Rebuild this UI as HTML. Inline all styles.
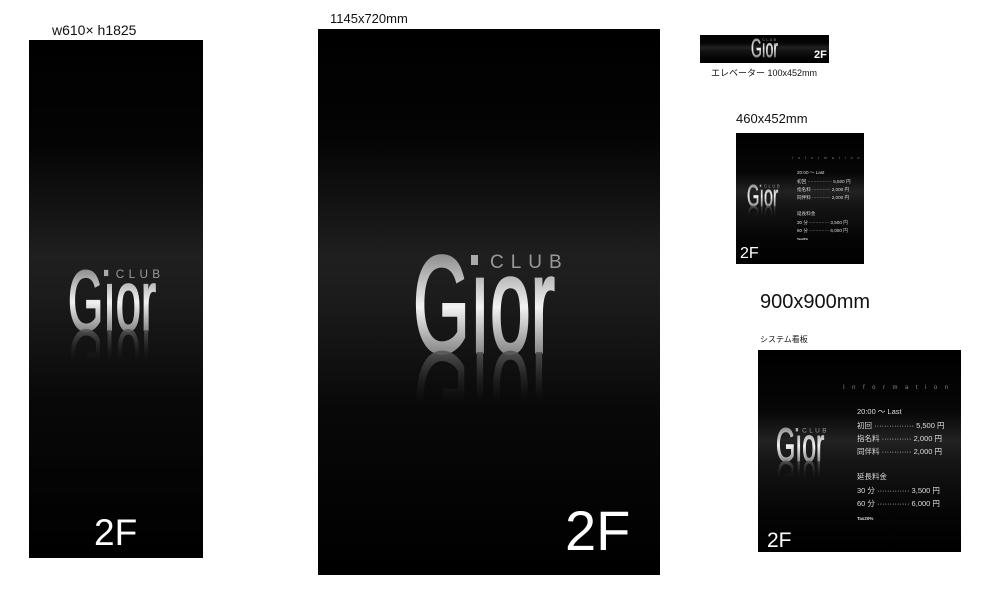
<!DOCTYPE html>
<html><head><meta charset="utf-8"><style>
html,body{margin:0;padding:0;background:#fff;width:981px;height:606px;overflow:hidden}
svg{display:block}
text{font-family:"Liberation Sans","Noto Sans CJK JP",sans-serif}
</style></head><body>
<svg width="981" height="606" viewBox="0 0 981 606" xmlns="http://www.w3.org/2000/svg">
<defs>
<linearGradient id="bg" x1="0" y1="0" x2="0" y2="1">
<stop offset="0" stop-color="#000"/><stop offset="0.2" stop-color="#040404"/>
<stop offset="0.42" stop-color="#1f1f1f"/><stop offset="0.5" stop-color="#1b1b1b"/>
<stop offset="0.7" stop-color="#080808"/><stop offset="1" stop-color="#000"/>
</linearGradient>
<linearGradient id="bgs" x1="0" y1="0" x2="0" y2="1">
<stop offset="0" stop-color="#000"/><stop offset="0.3" stop-color="#060606"/>
<stop offset="0.45" stop-color="#222"/><stop offset="0.55" stop-color="#151515"/>
<stop offset="0.8" stop-color="#050505"/><stop offset="1" stop-color="#000"/>
</linearGradient>
<linearGradient id="gt" gradientUnits="userSpaceOnUse" x1="0" y1="0" x2="0" y2="100">
<stop offset="0" stop-color="#8a8a8a"/><stop offset="0.55" stop-color="#f2f2f2"/><stop offset="1" stop-color="#8a8a8a"/>
</linearGradient>
<linearGradient id="rf" gradientUnits="userSpaceOnUse" x1="0" y1="100" x2="0" y2="50">
<stop offset="0" stop-color="#555" stop-opacity="0.9"/><stop offset="1" stop-color="#222" stop-opacity="0"/>
</linearGradient>
</defs>

<text x="52" y="35" font-size="14" fill="#111">w610× h1825</text>
<text x="330" y="23" font-size="13" fill="#111">1145x720mm</text>
<text x="711" y="76" font-size="9" fill="#111">エレベーター 100x452mm</text>
<text x="736" y="123" font-size="13" fill="#111">460x452mm</text>
<text x="760" y="308" font-size="20" fill="#111">900x900mm</text>
<text x="760" y="342" font-size="8" fill="#111">システム看板</text>

<rect x="29" y="40" width="174" height="518" fill="url(#bg)"/>
<rect x="318" y="29" width="342" height="546" fill="url(#bg)"/>
<rect x="700" y="35" width="129" height="28" fill="url(#bgs)"/>
<rect x="736" y="133" width="128" height="131" fill="url(#bgs)"/>
<rect x="758" y="350" width="203" height="202" fill="url(#bgs)"/>

<g transform="translate(68,268) scale(0.62)">
<text x="0" y="100" font-size="138" textLength="142" lengthAdjust="spacingAndGlyphs" fill="url(#gt)" stroke="url(#gt)" stroke-width="3">Gıor</text>
<rect x="58" y="3" width="7" height="10" fill="#aaa"/>
<text x="77" y="16" font-size="19" letter-spacing="7" fill="#999">CLUB</text>
<g transform="translate(0,200) scale(1,-1)"><text x="0" y="100" font-size="138" textLength="142" lengthAdjust="spacingAndGlyphs" fill="url(#rf)">Gıor</text></g>
</g>
<g transform="translate(413,252)">
<text x="0" y="100" font-size="138" textLength="142" lengthAdjust="spacingAndGlyphs" fill="url(#gt)" stroke="url(#gt)" stroke-width="3">Gıor</text>
<rect x="58" y="3" width="7" height="10" fill="#aaa"/>
<text x="77" y="16" font-size="19" letter-spacing="7" fill="#999">CLUB</text>
<g transform="translate(0,200) scale(1,-1)"><text x="0" y="100" font-size="138" textLength="142" lengthAdjust="spacingAndGlyphs" fill="url(#rf)">Gıor</text></g>
</g>
<g transform="translate(751,38) scale(0.19)">
<text x="0" y="100" font-size="138" textLength="142" lengthAdjust="spacingAndGlyphs" fill="url(#gt)" stroke="url(#gt)" stroke-width="3">Gıor</text>
<text x="60" y="16" font-size="19" letter-spacing="7" fill="#999">CLUB</text>
</g>
<g transform="translate(747,184) scale(0.22)">
<text x="0" y="100" font-size="138" textLength="142" lengthAdjust="spacingAndGlyphs" fill="url(#gt)" stroke="url(#gt)" stroke-width="3">Gıor</text>
<rect x="58" y="3" width="7" height="10" fill="#aaa"/>
<text x="77" y="16" font-size="19" letter-spacing="7" fill="#999">CLUB</text>
<g transform="translate(0,200) scale(1,-1)"><text x="0" y="100" font-size="138" textLength="142" lengthAdjust="spacingAndGlyphs" fill="url(#rf)">Gıor</text></g>
</g>
<g transform="translate(776,427) scale(0.34)">
<text x="0" y="100" font-size="138" textLength="142" lengthAdjust="spacingAndGlyphs" fill="url(#gt)" stroke="url(#gt)" stroke-width="3">Gıor</text>
<rect x="58" y="3" width="7" height="10" fill="#aaa"/>
<text x="77" y="16" font-size="19" letter-spacing="7" fill="#999">CLUB</text>
<g transform="translate(0,200) scale(1,-1)"><text x="0" y="100" font-size="138" textLength="142" lengthAdjust="spacingAndGlyphs" fill="url(#rf)">Gıor</text></g>
</g>

<text x="94" y="545" font-size="37" fill="#fff">2F</text>
<text x="565" y="550" font-size="56" fill="#fff">2F</text>
<text x="814" y="58" font-size="11" font-weight="bold" fill="#fff">2F</text>
<text x="740" y="258" font-size="16" fill="#fff">2F</text>
<text x="767" y="547" font-size="21" fill="#fff">2F</text>

<g font-size="7.5" fill="#ddd">
<text x="843" y="389" font-size="6" letter-spacing="7.5" fill="#888">Information</text>
<text x="857" y="414">20:00 ～ Last</text>
<text x="857" y="428">初回 ················ 5,500 円</text>
<text x="857" y="441">指名料 ············ 2,000 円</text>
<text x="857" y="454">同伴料 ············ 2,000 円</text>
<text x="857" y="479">延長料金</text>
<text x="857" y="493">30 分 ············· 3,500 円</text>
<text x="857" y="506">60 分 ············· 6,000 円</text>
<text x="857" y="520" font-size="4.5" font-weight="bold">Tax20%</text>
</g>
<g font-size="4.6" fill="#ddd">
<text x="792" y="159" font-size="3.5" letter-spacing="5" fill="#888">Information</text>
<text x="797" y="174">20:00 ～ Last</text>
<text x="797" y="183">初回 ················ 5,500 円</text>
<text x="797" y="191">指名料 ············ 2,000 円</text>
<text x="797" y="199">同伴料 ············ 2,000 円</text>
<text x="797" y="215">延長料金</text>
<text x="797" y="224">30 分 ············· 3,500 円</text>
<text x="797" y="232">60 分 ············· 6,000 円</text>
<text x="797" y="240" font-size="3" font-weight="bold">Tax20%</text>
</g>
</svg>
</body></html>
